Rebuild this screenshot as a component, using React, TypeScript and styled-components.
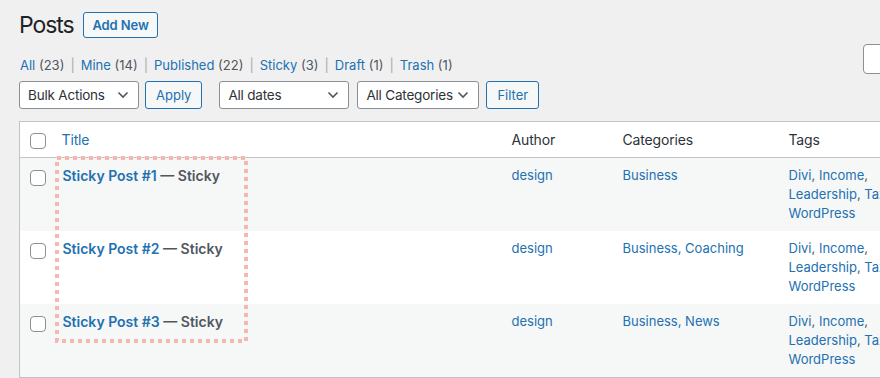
import React from "react";
import styled, { createGlobalStyle } from "styled-components";

const Global = createGlobalStyle`
  html, body { margin: 0; padding: 0; }
  body {
    background: #f0f0f1;
    font-family: Inter, "Noto Sans", "DejaVu Sans", sans-serif;
    color: #3c434a;
    overflow: hidden;
    width: 880px;
    height: 378px;
  }
  * { box-sizing: border-box; }
`;

const Page = styled.div`
  padding-left: 19px;
  width: 1200px;
`;

const HeaderRow = styled.div`
  display: flex;
  align-items: center;
  padding-top: 10px;
  height: 40px;
`;

const Title = styled.h1`
  margin: 0;
  font-size: 23px;
  font-weight: 400;
  letter-spacing: -1.1px;
  line-height: 30px;
  color: #1d2327;
`;

const AddNew = styled.a`
  margin-left: 10px;
  display: inline-flex;
  align-items: center;
  height: 26px;
  padding: 0 8px;
  border: 1px solid #2271b1;
  border-radius: 3px;
  color: #2271b1;
  background: #f6f7f7;
  font-size: 13px;
  font-weight: 600;
  letter-spacing: -0.1px;
`;

const FilterRow = styled.div`
  display: grid;
  grid-template-columns: 844px 200px;
  align-items: start;
  margin-top: 4px;
`;

const Subs = styled.ul`
  list-style: none;
  margin: 8px 0 0 1px;
  padding: 0;
  display: flex;
  font-size: 13px;
  line-height: 26px;
  color: #646970;
`;

const SubItem = styled.li`
  white-space: pre;
`;

const Link = styled.a`
  color: #2271b1;
`;

const Count = styled.span`
  color: #50575e;
`;

const Sep = styled.span`
  color: #a7aaad;
  padding: 0 6px;
`;

const SearchBox = styled.div`
  height: 30px;
  border: 1px solid #8c8f94;
  border-radius: 4px;
  background: #fff;
`;

const Controls = styled.div`
  display: flex;
  align-items: center;
  margin-top: 3px;
  height: 28px;
`;

const Select = styled.div<{ w: number; gap?: number }>`
  width: ${(p) => p.w}px;
  height: 28px;
  margin-left: ${(p) => p.gap ?? 0}px;
  display: flex;
  align-items: center;
  justify-content: space-between;
  padding: 0 9px 0 8px;
  border: 1px solid #8c8f94;
  border-radius: 3px;
  background: #fff;
  font-size: 13.5px;
  letter-spacing: -0.2px;
  white-space: nowrap;
  color: #2c3338;
`;

const Button = styled.div<{ gap: number }>`
  margin-left: ${(p) => p.gap}px;
  height: 28px;
  display: flex;
  align-items: center;
  padding: 0 10px;
  border: 1px solid #2271b1;
  border-radius: 3px;
  background: #f6f7f7;
  color: #2271b1;
  font-size: 13px;
`;

const TableWrap = styled.div`
  position: relative;
  margin-top: 12px;
`;

const Table = styled.table`
  border-collapse: collapse;
  border: 1px solid #c3c4c7;
  background: #fff;
  table-layout: fixed;
  width: 1100px;
`;

const Th = styled.th<{ w?: number }>`
  ${(p) => (p.w ? `width: ${p.w}px;` : "")}
  text-align: left;
  font-weight: 400;
  font-size: 14px;
  letter-spacing: -0.15px;
  line-height: 19px;
  padding: 8px 10px;
  color: #2c3338;
  border-bottom: 1px solid #c3c4c7;
  vertical-align: top;
`;

const CheckTh = styled.th`
  width: 32px;
  padding: 11px 0 0 10px;
  border-bottom: 1px solid #c3c4c7;
  vertical-align: top;
`;

const Row = styled.tr<{ odd: boolean }>`
  background: ${(p) => (p.odd ? "#f6f7f7" : "#fff")};
`;

const CheckTd = styled.td`
  padding: 12px 0 0 10px;
  vertical-align: top;
  height: 73px;
`;

const Td = styled.td`
  padding: 8px 10px;
  font-size: 13px;
  line-height: 19px;
  vertical-align: top;
  color: #50575e;
`;

const TagsText = styled.div`
  width: 125px;
`;

const RowTitle = styled.strong`
  font-size: 14px;
  font-weight: 600;
  color: #50575e;
  display: block;
  padding-left: 1px;
`;

const Box = styled.span`
  display: block;
  width: 16px;
  height: 16px;
  border: 1px solid #8c8f94;
  border-radius: 4px;
  background: #fff;
`;

const Highlight = styled.svg`
  position: absolute;
  left: 36px;
  top: 35px;
  width: 193px;
  height: 187px;
  pointer-events: none;
`;

const Chevron = () => (
  <svg width="12" height="8" viewBox="0 0 12 8" fill="none">
    <path d="M1.5 1.5 L6 6 L10.5 1.5" stroke="#50575e" strokeWidth="1.6" />
  </svg>
);

const subs: [string, string][] = [
  ["All", "(23)"],
  ["Mine", "(14)"],
  ["Published", "(22)"],
  ["Sticky", "(3)"],
  ["Draft", "(1)"],
  ["Trash", "(1)"],
];

const rows = [
  { n: 1, cats: "Business" },
  { n: 2, cats: "Business, Coaching" },
  { n: 3, cats: "Business, News" },
];

export default function App() {
  return (
    <>
      <Global />
      <Page>
        <HeaderRow>
          <Title>Posts</Title>
          <AddNew>Add New</AddNew>
        </HeaderRow>
        <FilterRow>
          <Subs>
            {subs.map(([l, c], i) => (
              <SubItem key={l}>
                <Link>{l}</Link> <Count>{c}</Count>
                {i < subs.length - 1 && <Sep>|</Sep>}
              </SubItem>
            ))}
          </Subs>
          <SearchBox />
        </FilterRow>
        <Controls>
          <Select w={120}>
            Bulk Actions <Chevron />
          </Select>
          <Button gap={6}>Apply</Button>
          <Select w={130} gap={17}>
            All dates <Chevron />
          </Select>
          <Select w={122} gap={8}>
            All Categories <Chevron />
          </Select>
          <Button gap={7}>Filter</Button>
        </Controls>
        <TableWrap>
          <Table>
            <thead>
              <tr>
                <CheckTh>
                  <Box />
                </CheckTh>
                <Th w={450}>
                  <Link>Title</Link>
                </Th>
                <Th w={111}>Author</Th>
                <Th w={166}>Categories</Th>
                <Th w={145}>Tags</Th>
                <Th>Comments</Th>
              </tr>
            </thead>
            <tbody>
              {rows.map((r, i) => (
                <Row key={r.n} odd={i % 2 === 0}>
                  <CheckTd>
                    <Box />
                  </CheckTd>
                  <Td>
                    <RowTitle>
                      <Link>Sticky Post #{r.n}</Link> — Sticky
                    </RowTitle>
                  </Td>
                  <Td>
                    <Link>design</Link>
                  </Td>
                  <Td>
                    <Link>{r.cats}</Link>
                  </Td>
                  <Td>
                    <TagsText>
                      <Link>Divi</Link>, <Link>Income</Link>, <Link>Leadership</Link>,{" "}
                      <Link>Taxes</Link>, <Link>WordPress</Link>
                    </TagsText>
                  </Td>
                  <Td>—</Td>
                </Row>
              ))}
            </tbody>
          </Table>
          <Highlight viewBox="0 0 193 187">
            <rect
              x="2"
              y="2"
              width="189"
              height="183"
              fill="none"
              stroke="#f7b7b0"
              strokeWidth="4"
              strokeDasharray="4 4"
            />
          </Highlight>
        </TableWrap>
      </Page>
    </>
  );
}
